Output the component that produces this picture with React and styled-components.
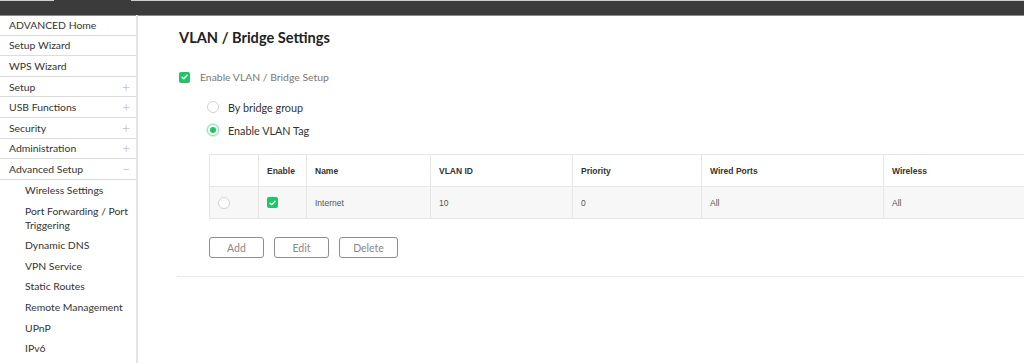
import React from "react";
import styled, { createGlobalStyle } from "styled-components";

const Global = createGlobalStyle`
  html, body { margin: 0; padding: 0; background: #fff; }
  body { font-family: Lato, "Open Sans", sans-serif; overflow: hidden; }
  #root { width: 1024px; height: 363px; overflow: hidden; }
`;

const Page = styled.div`
  display: flex;
  flex-direction: column;
  width: 1024px;
  height: 363px;
`;

const TopStrip = styled.div`
  display: flex;
  height: 1px;
  flex: none;
  background: #cfcfcf;
`;

const TopTab = styled.div`
  margin-left: 54px;
  width: 77px;
  background: #3b3b3b;
`;

const TopBar = styled.div`
  height: 14px;
  flex: none;
  background: #3b3b3b;
  border-bottom: 1px solid #8a8a8a;
`;

const Body = styled.div`
  display: flex;
  flex: 1;
  min-height: 0;
`;

const Sidebar = styled.nav`
  width: 136px;
  flex: none;
  border-right: 2px solid #e4e4e4;
  display: flex;
  flex-direction: column;
  margin-top: -1px;
`;

const NavItem = styled.div`
  display: flex;
  flex: none;
  align-items: center;
  justify-content: space-between;
  height: 19.6px;
  padding: 0 6px 0 9px;
  border-bottom: 1px solid #dcdcdc;
  font-size: 10.4px;
  color: #333;
`;

const Sign = styled.span`
  color: #ababab;
  font-size: 14px;
  font-weight: 300;
  line-height: 1;
`;

const SubItem = styled.div`
  flex: none;
  padding: 3.3px 4px 3.3px 25px;
  line-height: 14px;
  font-size: 10.4px;
  color: #333;
`;

const Main = styled.main`
  flex: 1;
  padding: 12px 0 0 41px;
  min-width: 0;
`;

const Title = styled.h1`
  margin: 0;
  font-size: 14.6px;
  font-weight: 700;
  color: #222;
  line-height: 20px;
`;

const CheckRow = styled.label`
  display: flex;
  align-items: center;
  gap: 10px;
  margin-top: 23px;
  font-size: 10.4px;
  color: #777;
  height: 12px;
`;

const Check = styled.span`
  width: 11px;
  height: 11px;
  border-radius: 2px;
  background: #1fc666;
  display: inline-flex;
  align-items: center;
  justify-content: center;
  flex: none;
`;

const RadioGroup = styled.div`
  display: flex;
  flex-direction: column;
  gap: 11px;
  margin: 18px 0 0 28px;
`;

const RadioRow = styled.label`
  display: flex;
  align-items: center;
  gap: 9px;
  font-size: 10.8px;
  color: #333;
  height: 12px;
`;

const Radio = styled.span`
  width: 10px;
  height: 10px;
  border-radius: 50%;
  border: 1px solid ${(p) => (p.$on ? "#8fe3b2" : "#d2d2d2")};
  background: #fff;
  display: inline-flex;
  align-items: center;
  justify-content: center;
  flex: none;
  box-shadow: ${(p) => (p.$on ? "0 0 0 1px #d3f4e1" : "none")};
  &::after {
    content: "";
    width: 6px;
    height: 6px;
    border-radius: 50%;
    background: ${(p) => (p.$on ? "#1fc666" : "transparent")};
  }
`;

const Table = styled.table`
  margin: 18px 0 0 30px;
  border-collapse: collapse;
  table-layout: fixed;
  width: 900px;
  font-family: "Liberation Sans", Arial, sans-serif;
`;

const Th = styled.th`
  height: 31px;
  padding: 0 8px;
  border: 1px solid #e6e6e6;
  text-align: left;
  font-size: 8.5px;
  font-weight: 700;
  color: #333;
  background: #fff;
`;

const Td = styled.td`
  height: 31px;
  padding: 0 8px;
  border: 1px solid #e6e6e6;
  background: #f7f7f7;
  font-size: 8.5px;
  color: #555;
  text-align: left;
`;

const Buttons = styled.div`
  display: flex;
  gap: 10px;
  margin: 18px 0 0 30px;
`;

const Button = styled.button`
  height: 21px;
  width: ${(p) => p.$w}px;
  border: 1px solid #8e8e8e;
  border-radius: 3px;
  background: #fff;
  color: #888;
  font-family: Lato, sans-serif;
  font-size: 10.5px;
  padding: 0;
`;

const Divider = styled.hr`
  margin: 18px 0 0 -2px;
  border: none;
  border-top: 1px solid #e2e8ec;
  height: 0;
`;

const CheckMark = () => (
  <svg width="7" height="6" viewBox="0 0 7 6">
    <path d="M1 3.2 L2.8 4.8 L6 1.2" fill="none" stroke="#fff" strokeWidth="1.4" strokeLinecap="round" strokeLinejoin="round" />
  </svg>
);

const nav = [
  ["ADVANCED Home", null],
  ["Setup Wizard", null],
  ["WPS Wizard", null],
  ["Setup", "+"],
  ["USB Functions", "+"],
  ["Security", "+"],
  ["Administration", "+"],
  ["Advanced Setup", "−"],
];

const subs = [
  "Wireless Settings",
  "Port Forwarding / Port Triggering",
  "Dynamic DNS",
  "VPN Service",
  "Static Routes",
  "Remote Management",
  "UPnP",
  "IPv6",
];

const cols = [
  ["", 49],
  ["Enable", 48],
  ["Name", 124],
  ["VLAN ID", 142],
  ["Priority", 129],
  ["Wired Ports", 182],
  ["Wireless", 226],
];

export default function App() {
  return (
    <Page>
      <Global />
      <TopStrip>
        <TopTab />
      </TopStrip>
      <TopBar />
      <Body>
        <Sidebar>
          {nav.map(([label, sign]) => (
            <NavItem key={label}>
              <span>{label}</span>
              {sign && <Sign>{sign}</Sign>}
            </NavItem>
          ))}
          {subs.map((s) => (
            <SubItem key={s}>{s}</SubItem>
          ))}
        </Sidebar>
        <Main>
          <Title>VLAN / Bridge Settings</Title>
          <CheckRow>
            <Check>
              <CheckMark />
            </Check>
            Enable VLAN / Bridge Setup
          </CheckRow>
          <RadioGroup>
            <RadioRow>
              <Radio />
              By bridge group
            </RadioRow>
            <RadioRow>
              <Radio $on />
              Enable VLAN Tag
            </RadioRow>
          </RadioGroup>
          <Table>
            <colgroup>
              {cols.map(([c, w], i) => (
                <col key={i} style={{ width: w }} />
              ))}
            </colgroup>
            <thead>
              <tr>
                {cols.map(([c], i) => (
                  <Th key={i}>{c}</Th>
                ))}
              </tr>
            </thead>
            <tbody>
              <tr>
                <Td>
                  <Radio />
                </Td>
                <Td>
                  <Check>
                    <CheckMark />
                  </Check>
                </Td>
                <Td>Internet</Td>
                <Td>10</Td>
                <Td>0</Td>
                <Td>All</Td>
                <Td>All</Td>
              </tr>
            </tbody>
          </Table>
          <Buttons>
            <Button $w={55}>Add</Button>
            <Button $w={55}>Edit</Button>
            <Button $w={59}>Delete</Button>
          </Buttons>
          <Divider />
        </Main>
      </Body>
    </Page>
  );
}
